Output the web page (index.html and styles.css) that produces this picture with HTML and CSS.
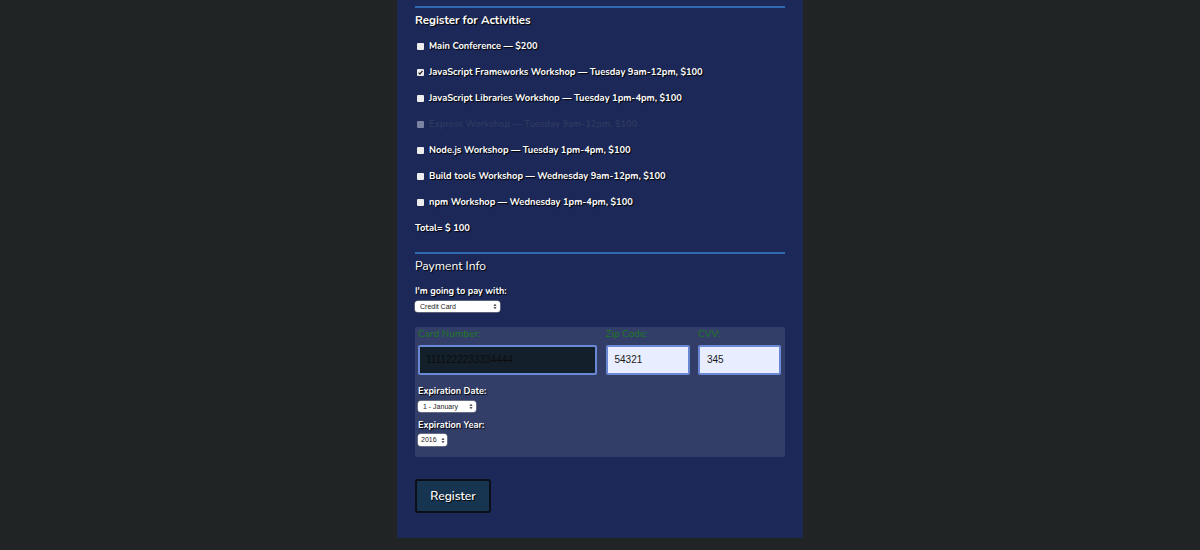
FILE: index.html
```html
<!DOCTYPE html>
<html>
<head>
<meta charset="utf-8">
<link rel="stylesheet" href="styles.css">
</head>
<body>
<div class="panel">
  <div class="rule"></div>
  <h2 class="heading">Register for Activities</h2>
  <label class="row"><span class="cb"></span>Main Conference — $200</label>
  <label class="row"><span class="cb checked"><svg viewBox="0 0 8 8" width="8" height="8"><path d="M1.8 4.2 L3.3 5.7 L6.3 2.2" fill="none" stroke="#222" stroke-width="1.4"/></svg></span>JavaScript Frameworks Workshop — Tuesday 9am-12pm, $100</label>
  <label class="row"><span class="cb"></span>JavaScript Libraries Workshop — Tuesday 1pm-4pm, $100</label>
  <label class="row disabled"><span class="cb"></span>Express Workshop — Tuesday 9am-12pm, $100</label>
  <label class="row"><span class="cb"></span>Node.js Workshop — Tuesday 1pm-4pm, $100</label>
  <label class="row"><span class="cb"></span>Build tools Workshop — Wednesday 9am-12pm, $100</label>
  <label class="row"><span class="cb"></span>npm Workshop — Wednesday 1pm-4pm, $100</label>
  <div class="row total">Total= $ 100</div>

  <div class="rule rule2"></div>
  <h2 class="heading light">Payment Info</h2>
  <div class="label">I'm going to pay with:</div>
  <div class="sel sel-pay"><span>Credit Card</span><svg class="arr" viewBox="0 0 5 8" width="5" height="8"><path d="M0.5 3 L2.5 0.8 L4.5 3 Z M0.5 5 L2.5 7.2 L4.5 5 Z" fill="#222"/></svg></div>

  <div class="cc">
    <div class="cc-grid">
      <div class="cc-label">Card Number:</div>
      <div class="cc-label">Zip Code:</div>
      <div class="cc-label">CVV:</div>
      <div class="inp dark">1111222233334444</div>
      <div class="inp">54321</div>
      <div class="inp">345</div>
    </div>
    <div class="label exp1">Expiration Date:</div>
    <div class="sel sel-month"><span>1 - January</span><svg class="arr" viewBox="0 0 5 8" width="5" height="8"><path d="M0.5 3 L2.5 0.8 L4.5 3 Z M0.5 5 L2.5 7.2 L4.5 5 Z" fill="#222"/></svg></div>
    <div class="label exp2">Expiration Year:</div>
    <div class="sel sel-year"><span>2016</span><svg class="arr" viewBox="0 0 5 8" width="5" height="8"><path d="M0.5 3 L2.5 0.8 L4.5 3 Z M0.5 5 L2.5 7.2 L4.5 5 Z" fill="#222"/></svg></div>
  </div>

  <button class="btn">Register</button>
</div>
</body>
</html>
```
FILE: styles.css
```css
html, body {
  margin: 0;
  padding: 0;
  background: #212425;
  height: 100%;
}
body {
  font-family: "Nunito", Lato, "Open Sans", sans-serif;
  color: #fff;
}
.panel {
  width: 370px;
  margin: 0 0 0 397px;
  padding: 6px 18px 25px 18px;
  background: #1c2857;
}
.rule {
  height: 2px;
  background: #2e6aad;
}
.rule2 {
  margin-top: 11px;
}
.heading {
  margin: 0;
  height: 25px;
  line-height: 24px;
  font-size: 11.5px;
  font-weight: 700;
  text-shadow: 1px 1px 1px #000;
}
.heading.light {
  font-weight: 400;
  font-size: 12px;
  height: 24px;
}
.row {
  display: flex;
  align-items: center;
  height: 26px;
  font-size: 9.3px;
  font-weight: 700;
  text-shadow: 1px 1px 1px #000;
}
.cb {
  width: 7px;
  height: 7px;
  margin: 0 5px 0 2px;
  background: #ededed;
  border-radius: 1px;
  display: inline-flex;
  align-items: center;
  justify-content: center;
  flex: none;
}
.cb svg { display: block; width: 7px; height: 7px; }
.disabled {
  color: #2c385f;
  text-shadow: none;
}
.disabled .cb {
  background: #7d84a3;
}
.label {
  margin-top: 6px;
  height: 14px;
  line-height: 14px;
  font-size: 9.1px;
  font-weight: 700;
  text-shadow: 1px 1px 1px #000;
}
.sel {
  position: relative;
  margin-top: 3px;
  height: 11px;
  background: #fff;
  border-radius: 3px;
  box-shadow: 0 0 0 0.5px #999;
  color: #222;
  font-family: "Liberation Sans", Arial, sans-serif;
  font-size: 7px;
  line-height: 11px;
  padding-left: 5px;
  box-sizing: border-box;
}
.sel .arr {
  position: absolute;
  right: 3px;
  top: 2px;
  width: 4px;
  height: 7px;
}
.sel-pay { width: 85px; }
.sel-month { width: 58px; }
.sel-year { width: 29px; height: 12px; margin-top: 2px; line-height: 12px; padding-left: 3px; }
.sel-year .arr { top: 2.5px; right: 2px; }
.cc {
  margin-top: 15px;
  background: #323e68;
  border-radius: 3px;
  padding: 1px 4px 11px 3px;
}
.cc-grid {
  display: grid;
  grid-template-columns: 179px 84px 83px;
  column-gap: 8.5px;
  row-gap: 5px;
}
.cc-label {
  color: #1e7a1f;
  font-size: 10px;
  height: 12px;
  line-height: 12px;
}
.inp {
  height: 30px;
  box-sizing: border-box;
  border: 2px solid #6a88d6;
  border-radius: 2px;
  background: #e8eeff;
  color: #1a1a1a;
  font-family: "Liberation Sans", Arial, sans-serif;
  font-size: 10px;
  line-height: 26px;
  padding-left: 7px;
}
.inp.dark {
  background: #13202c;
  color: #0c0c0c;
  padding-left: 6px;
}
.exp1 { margin-top: 9px; }
.exp2 { margin-top: 6px; }
.btn {
  display: block;
  margin-top: 22px;
  width: 76px;
  height: 34px;
  background: #173550;
  border: 2px solid #0b0f18;
  border-radius: 3px;
  color: #fff;
  font-family: "Nunito", Lato, "Open Sans", sans-serif;
  font-size: 12px;
  font-weight: 600;
  text-shadow: 1px 1px 1px #000;
  padding: 0;
}
```
